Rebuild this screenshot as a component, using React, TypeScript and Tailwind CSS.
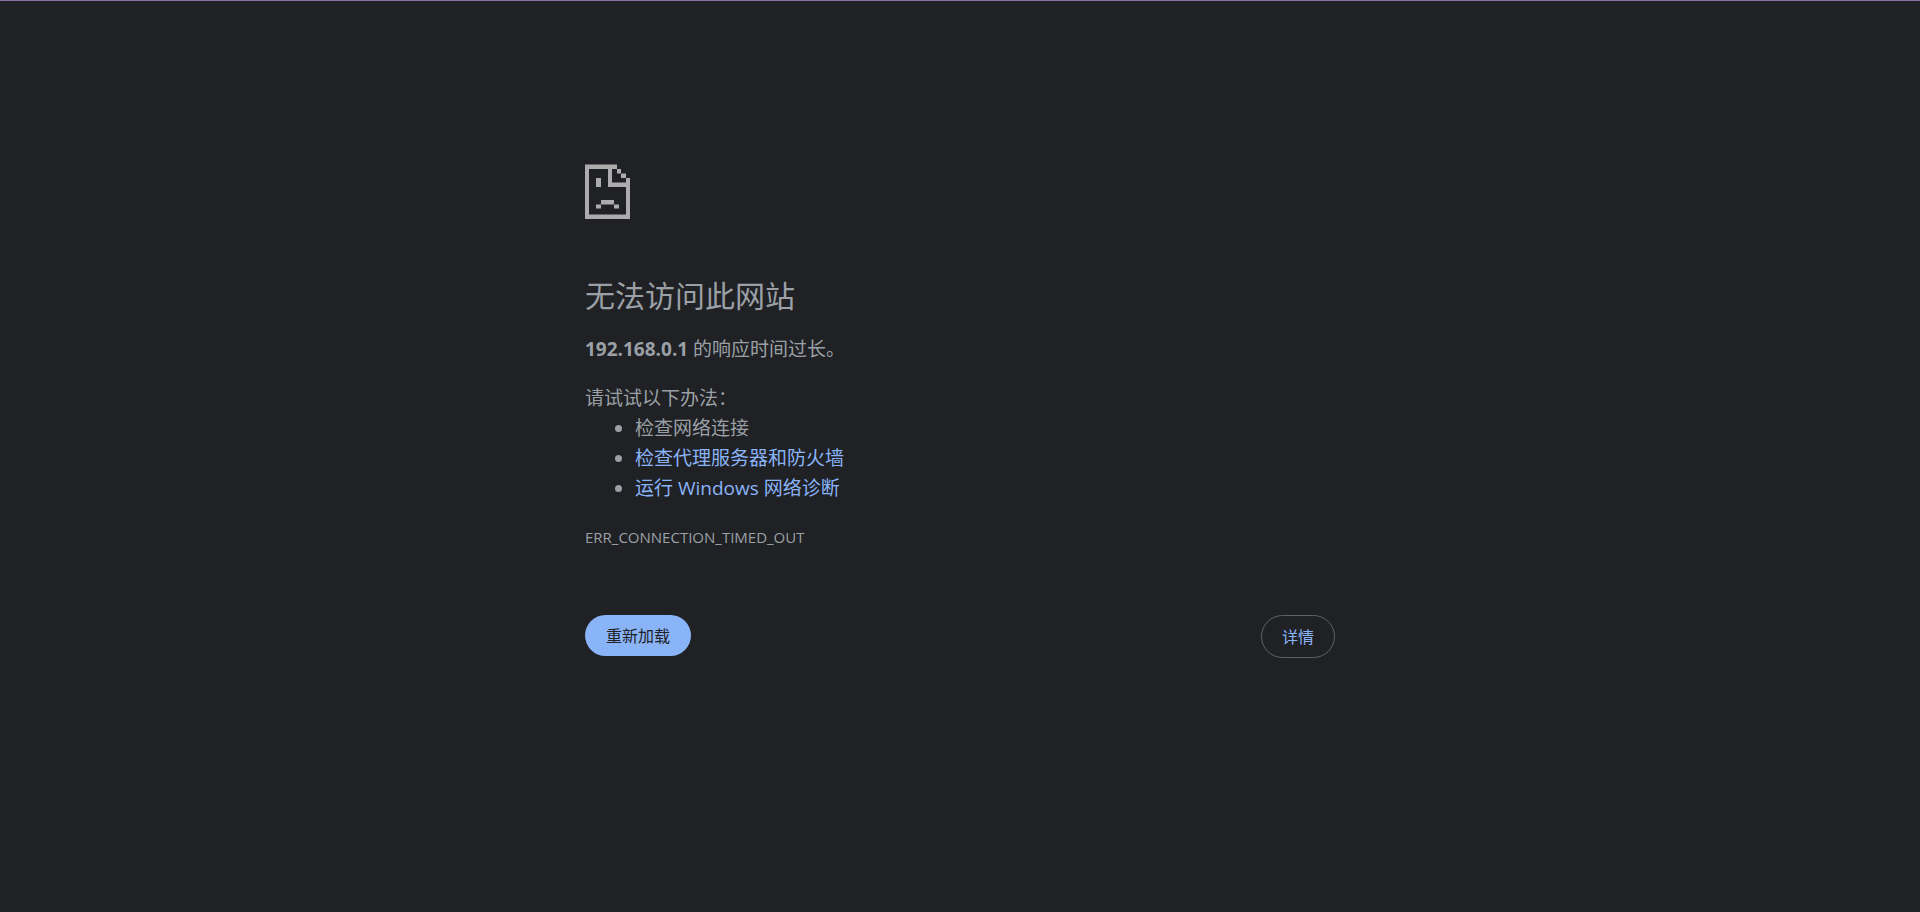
import { useState } from 'react';

function SadPageIcon() {
  return (
    <svg width="45" height="55" viewBox="0 0 45 55" fill="#acacac" aria-hidden="true">
      {/* page outline */}
      <path d="M0 .5H32V5H4V50.500H41V23H23V5H27V18.500H45V55H0Z" />
      <path d="M41 14H45V19H41Z" />
      {/* folded corner */}
      <path d="M32 5H36V9.500H32Z" />
      <path d="M36 9.500H41V14H36Z" />
      {/* face */}
      <path d="M11 14H16V23H11Z" />
      <path d="M16 36H29V40.500H16Z" />
      <path d="M11 40.500H16V44.500H11Z" />
      <path d="M29 40.500H34V44.500H29Z" />
    </svg>
  );
}

export default function App() {
  const [showDetails, setShowDetails] = useState(false);

  return (
    <div
      lang="zh-CN"
      className="min-h-screen border-t border-[#8874a3] bg-[#202124] px-6 font-['Open_Sans','Noto_Sans_CJK_SC',sans-serif] text-[19px] leading-[30px] text-[#9aa0a6]"
    >
      <main className="mx-auto max-w-[750px] pt-[163px]">
        <SadPageIcon />

        <h1 className="mt-[55px] text-[30px] leading-11 font-normal">无法访问此网站</h1>

        <p className="mt-4">
          <strong className="font-bold">192.168.0.1</strong> 的响应时间过长。
        </p>

        <div className="mt-[19px]">
          <p>请试试以下办法：</p>
          <ul className="list-disc pl-[50px]">
            <li>检查网络连接</li>
            <li>
              <a href="#firewall" className="text-[#8ab4f8]">检查代理服务器和防火墙</a>
            </li>
            <li>
              <a href="#diagnose" className="text-[#8ab4f8]">运行 Windows 网络诊断</a>
            </li>
          </ul>
        </div>

        <p className="mt-[19px] text-[15px]">ERR_CONNECTION_TIMED_OUT</p>

        <div className="mt-[63px] flex items-start justify-between text-base leading-[21px]">
          <button
            type="button"
            onClick={() => window.location.reload()}
            className="rounded-full bg-[#8ab4f8] px-[21px] pt-[11px] pb-[9px] text-[#202124]"
          >
            重新加载
          </button>
          <button
            type="button"
            aria-pressed={showDetails}
            onClick={() => setShowDetails(!showDetails)}
            className="rounded-full border border-[#5f6368] px-5 pt-[11px] pb-[9px] text-[#8ab4f8]"
          >
            详情
          </button>
        </div>
      </main>
    </div>
  );
}
